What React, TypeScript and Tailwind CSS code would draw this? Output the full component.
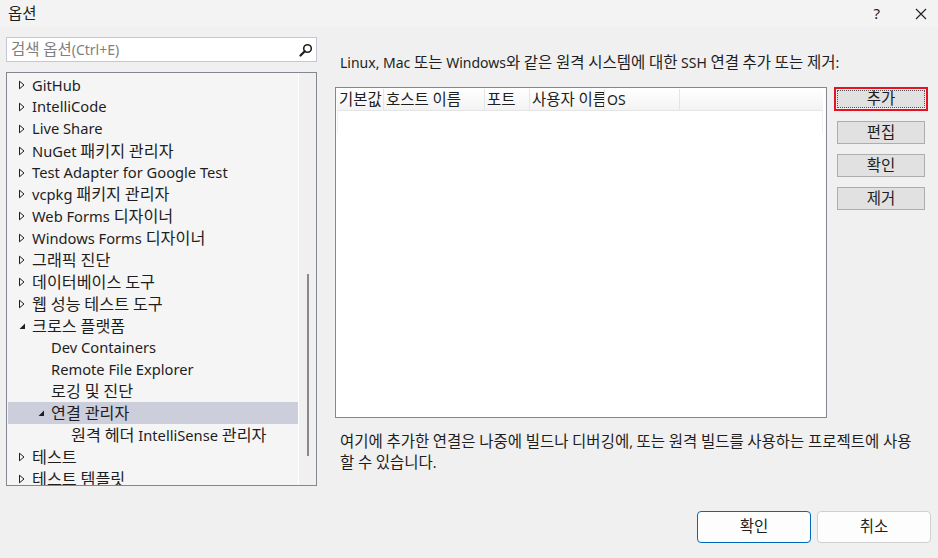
import React from 'react';

const font = { fontFamily: '"Noto Sans", "Noto Sans CJK KR", sans-serif' };

// Hangul runs are set a little larger so they take the width of the Windows UI font
const Ko = ({ text, size }: { text: string; size: 'tree' | 'body' }) => {
  const parts = text.split(/([\uAC00-\uD7A3]+)/);
  const cls = size === 'tree' ? 'text-[16.2px]' : 'text-[15.5px]';
  return (
    <span>
      {parts.map((p, i) =>
        /[\uAC00-\uD7A3]/.test(p) ? (
          <span key={i} className={cls}>
            {p}
          </span>
        ) : (
          <React.Fragment key={i}>{p}</React.Fragment>
        )
      )}
    </span>
  );
};

type Item = { label: string; level: number; arrow?: 'closed' | 'open'; selected?: boolean };

const items: Item[] = [
  { label: 'GitHub', level: 0, arrow: 'closed' },
  { label: 'IntelliCode', level: 0, arrow: 'closed' },
  { label: 'Live Share', level: 0, arrow: 'closed' },
  { label: 'NuGet 패키지 관리자', level: 0, arrow: 'closed' },
  { label: 'Test Adapter for Google Test', level: 0, arrow: 'closed' },
  { label: 'vcpkg 패키지 관리자', level: 0, arrow: 'closed' },
  { label: 'Web Forms 디자이너', level: 0, arrow: 'closed' },
  { label: 'Windows Forms 디자이너', level: 0, arrow: 'closed' },
  { label: '그래픽 진단', level: 0, arrow: 'closed' },
  { label: '데이터베이스 도구', level: 0, arrow: 'closed' },
  { label: '웹 성능 테스트 도구', level: 0, arrow: 'closed' },
  { label: '크로스 플랫폼', level: 0, arrow: 'open' },
  { label: 'Dev Containers', level: 1 },
  { label: 'Remote File Explorer', level: 1 },
  { label: '로깅 및 진단', level: 1 },
  { label: '연결 관리자', level: 1, arrow: 'open', selected: true },
  { label: '원격 헤더 IntelliSense 관리자', level: 2 },
  { label: '테스트', level: 0, arrow: 'closed' },
  { label: '테스트 템플릿', level: 0, arrow: 'closed' },
];

const Arrow = ({ kind }: { kind: 'closed' | 'open' }) =>
  kind === 'closed' ? (
    <svg width="8" height="10" viewBox="0 0 8 10">
      <path d="M1.5 1.2 L6 5 L1.5 8.8 Z" fill="none" stroke="#1e1e1e" strokeWidth="1" />
    </svg>
  ) : (
    <svg width="8" height="10" viewBox="0 0 8 10">
      <path d="M7 2.5 L7 8 L1.5 8 Z" fill="#1e1e1e" />
    </svg>
  );

const indent = ['pl-[10px]', 'pl-[29px]', 'pl-[49px]'];

const TreeRow = ({ item }: { item: Item }) => (
  <div
    className={`flex h-[21.9px] items-center whitespace-nowrap text-[14.7px] text-[#1e1e1e] ${indent[item.level]} ${
      item.selected ? 'bg-[#cccedb]' : ''
    }`}
  >
    <span className="flex w-[8px] items-center">{item.arrow && <Arrow kind={item.arrow} />}</span>
    <span className="ml-[6px] leading-none">
      <Ko text={item.label} size="tree" />
    </span>
  </div>
);

const SideButton = ({ label, focused }: { label: string; focused?: boolean }) =>
  focused ? (
    <div className="h-[24px] border-2 border-[#e81123] p-[1px]">
      <button className="flex h-full w-full items-center justify-center border border-dotted border-[#555] bg-[#e1e1e1] text-[14px] text-[#1e1e1e]">
        <Ko text={label} size="body" />
      </button>
    </div>
  ) : (
    <div className="px-[3px]">
      <button className="flex h-[23px] w-full items-center justify-center border border-[#adadad] bg-[#e1e1e1] text-[14px] text-[#1e1e1e]">
        <Ko text={label} size="body" />
      </button>
    </div>
  );

const columns = [
  { label: '기본값', w: 'w-[47px]' },
  { label: '호스트 이름', w: 'w-[101px]' },
  { label: '포트', w: 'w-[45px]' },
  { label: '사용자 이름', w: 'w-[75px]' },
  { label: 'OS', w: 'w-[75px]' },
];

export default function App() {
  return (
    <div className="flex h-[558px] w-[938px] flex-col overflow-hidden bg-[#f0f0f0] text-[#1e1e1e]" style={font}>
      {/* title bar */}
      <div className="flex h-[27px] items-center justify-between bg-[#f3f3f3] pl-[8px]">
        <span className="text-[15px]">
          <Ko text="옵션" size="body" />
        </span>
        <div className="flex items-center">
          <span className="mr-[35px] text-[15px]">?</span>
          <svg width="12" height="12" viewBox="0 0 12 12" className="mr-[11px]">
            <path d="M1 1 L11 11 M11 1 L1 11" stroke="#1e1e1e" strokeWidth="1.1" />
          </svg>
        </div>
      </div>

      <div className="flex h-[459px]">
        {/* left column */}
        <div className="flex w-[323px] flex-col pl-[6px] pr-[6px] pt-[10px]">
          <div className="flex h-[25px] items-center justify-between border border-[#c5c7d6] bg-white pl-[4px] pr-[3px]">
            <span className="text-[14px] text-[#808080]">
              <Ko text="검색 옵션(Ctrl+E)" size="body" />
            </span>
            <svg width="14" height="14" viewBox="0 0 14 14">
              <circle cx="8.5" cy="5.5" r="3.8" fill="none" stroke="#1e1e1e" strokeWidth="1.6" />
              <path d="M5.8 8.2 L1.5 12.5" stroke="#1e1e1e" strokeWidth="2.2" strokeLinecap="round" />
            </svg>
          </div>
          <div className="mt-[10px] flex h-[414px] border border-[#828790] bg-[#f5f5f5]">
            <div className="flex-1 overflow-hidden pl-[1px] pt-[1px]">
              {items.map((it) => (
                <TreeRow key={it.label} item={it} />
              ))}
            </div>
            <div className="flex w-[18px] justify-center border-l border-white bg-[#f0f0f0] pl-[1px]">
              <div className="mt-[201px] h-[182px] w-[2px] bg-[#8a8a8a]" />
            </div>
          </div>
        </div>

        {/* right column */}
        <div className="flex flex-1 flex-col pl-[12px] pr-[10px]">
          <p className="mt-[25px] pl-[5px] text-[14px] leading-[20px] whitespace-nowrap">
            <Ko text="Linux, Mac 또는 Windows와 같은 원격 시스템에 대한 SSH 연결 추가 또는 제거:" size="body" />
          </p>
          <div className="mt-[14px] flex gap-[7px]">
            <div className="h-[331px] w-[492px] border border-[#828790] bg-white pl-[1px] pr-[3px] pt-[1px]">
              <div className="flex h-[22px] border-b border-[#e5e5e5] bg-gradient-to-b from-white to-[#f3f3f3]">
                {columns.map((c) => (
                  <div
                    key={c.label}
                    className={`${c.w} flex items-center overflow-hidden whitespace-nowrap border-r border-[#e5e5e5] pl-[2px] text-[14px]`}
                  >
                    <Ko text={c.label} size="body" />
                  </div>
                ))}
                <div className="flex-1" />
              </div>
              <div className="h-[22px] border-l border-r border-[#f0f0f0]" />
            </div>
            <div className="flex w-[94px] flex-col gap-[10px]">
              <SideButton label="추가" focused />
              <SideButton label="편집" />
              <SideButton label="확인" />
              <SideButton label="제거" />
            </div>
          </div>
          <p className="mt-[13px] pl-[5px] pr-[10px] text-[14px] leading-[21px]">
            <Ko
              text="여기에 추가한 연결은 나중에 빌드나 디버깅에, 또는 원격 빌드를 사용하는 프로젝트에 사용 할 수 있습니다."
              size="body"
            />
          </p>
        </div>
      </div>

      {/* bottom bar */}
      <div className="flex justify-end gap-[6px] pr-[7px] pt-[25px]">
        <button className="h-[32px] w-[114px] rounded-[4px] border border-[#0067c0] bg-[#fdfdfd] text-[14px]">
          <Ko text="확인" size="body" />
        </button>
        <button className="h-[32px] w-[114px] rounded-[4px] border border-[#d0d0d0] bg-[#fdfdfd] text-[14px]">
          <Ko text="취소" size="body" />
        </button>
      </div>
    </div>
  );
}
